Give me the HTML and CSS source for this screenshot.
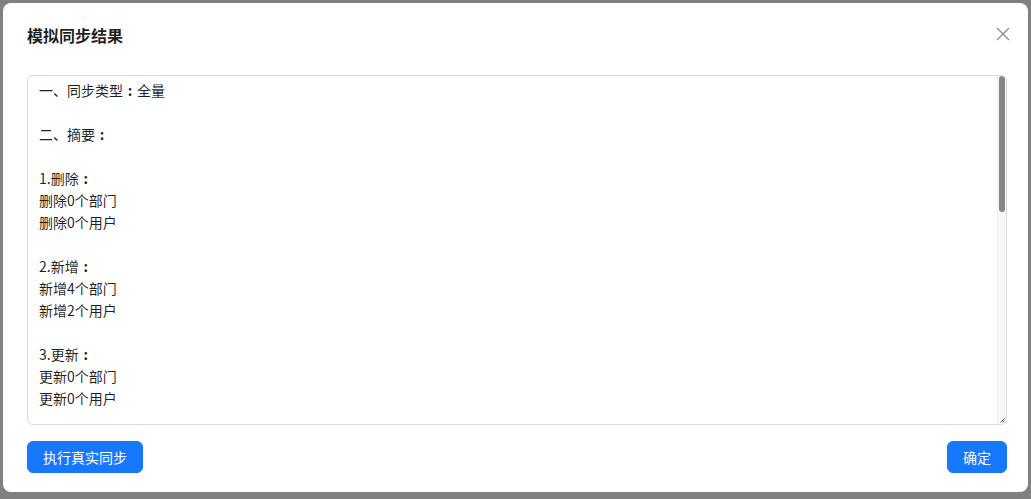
FILE: index.html
```html
<!DOCTYPE html>
<html lang="zh-CN">
<head>
  <meta charset="UTF-8" />
  <meta name="viewport" content="width=device-width, initial-scale=1.0"/>
  <title>模拟同步结果</title>
  <link rel="stylesheet" href="styles.css">
</head>
<body>
  <div class="mask">
    <div class="modal">
      <div class="modal-header">
        <h3 class="modal-title">模拟同步结果</h3>
        <button class="modal-close" type="button" aria-label="关闭">
          <svg width="14" height="14" viewBox="0 0 14 14">
            <path d="M1 1 L13 13 M13 1 L1 13" stroke="currentColor" stroke-width="1.3" fill="none"/>
          </svg>
        </button>
      </div>
      <div class="result">
        <div class="result-text">一、同步类型<span class="colon">:</span>全量

二、摘要<span class="colon">:</span>

1.删除<span class="colon">:</span>
删除0个部门
删除0个用户

2.新增<span class="colon">:</span>
新增4个部门
新增2个用户

3.更新<span class="colon">:</span>
更新0个部门
更新0个用户</div>
        <div class="scrollbar"><div class="scrollbar-thumb"></div></div>
        <svg class="grip" width="5" height="5" viewBox="0 0 5 5">
          <path d="M0.5 4.5 L4.5 0.5 M2.5 4.5 L4.5 2.5" stroke="#555" stroke-width="1" fill="none"/>
        </svg>
      </div>
      <div class="modal-footer">
        <button class="btn" type="button">执行真实同步</button>
        <button class="btn" type="button">确定</button>
      </div>
    </div>
  </div>
</body>
</html>
```

FILE: styles.css
```css
body {
  margin: 0;
  background-color: #808080;
  font-family: "Noto Sans CJK SC", "Noto Sans", sans-serif;
  font-size: 14px;
  color: rgba(0, 0, 0, 0.88);
}

.mask {
  height: 499px;
  padding: 3px 3px 0 3px;
  box-sizing: border-box;
}

.modal {
  position: relative;
  width: 1025px;
  background: white;
  border-radius: 8px;
  padding: 20px 21px 19px 24px;
  box-sizing: border-box;
}

.modal-header {
  margin-bottom: 28px;
}

.modal-title {
  margin: 0;
  font-size: 16px;
  line-height: 24px;
  font-weight: 700;
  color: rgba(0, 0, 0, 0.88);
}

.modal-close {
  position: absolute;
  top: 20px;
  right: 14px;
  width: 22px;
  height: 22px;
  padding: 0;
  border: none;
  background: transparent;
  color: #8c8c8c;
  display: flex;
  align-items: center;
  justify-content: center;
  cursor: pointer;
}

.result {
  position: relative;
  height: 350px;
  box-sizing: border-box;
  border: 1px solid #d9d9d9;
  border-radius: 6px;
  overflow: hidden;
}

.result-text {
  box-sizing: border-box;
  padding: 3px 11px;
  white-space: pre-wrap;
  font-size: 14px;
  line-height: 22px;
  color: rgba(0, 0, 0, 0.88);
}

.colon {
  display: inline-block;
  width: 14px;
  text-align: center;
  font-weight: 700;
}

.scrollbar {
  position: absolute;
  top: 0;
  right: 0;
  bottom: 0;
  width: 8px;
  background: #f7f7f7;
  border-left: 1px solid #f0f0f0;
}

.scrollbar-thumb {
  width: 6px;
  height: 136px;
  margin-left: 1px;
  background: #868686;
  border-radius: 3px;
}

.grip {
  position: absolute;
  right: 1px;
  bottom: 1px;
  background: #f7f7f7;
}

.modal-footer {
  display: flex;
  justify-content: space-between;
  margin-top: 16px;
}

.btn {
  height: 32px;
  padding: 4px 15px;
  border: 1px solid #1677ff;
  border-radius: 6px;
  background-color: #1677ff;
  color: white;
  font-family: inherit;
  font-size: 14px;
  line-height: 22px;
  cursor: pointer;
}
```
